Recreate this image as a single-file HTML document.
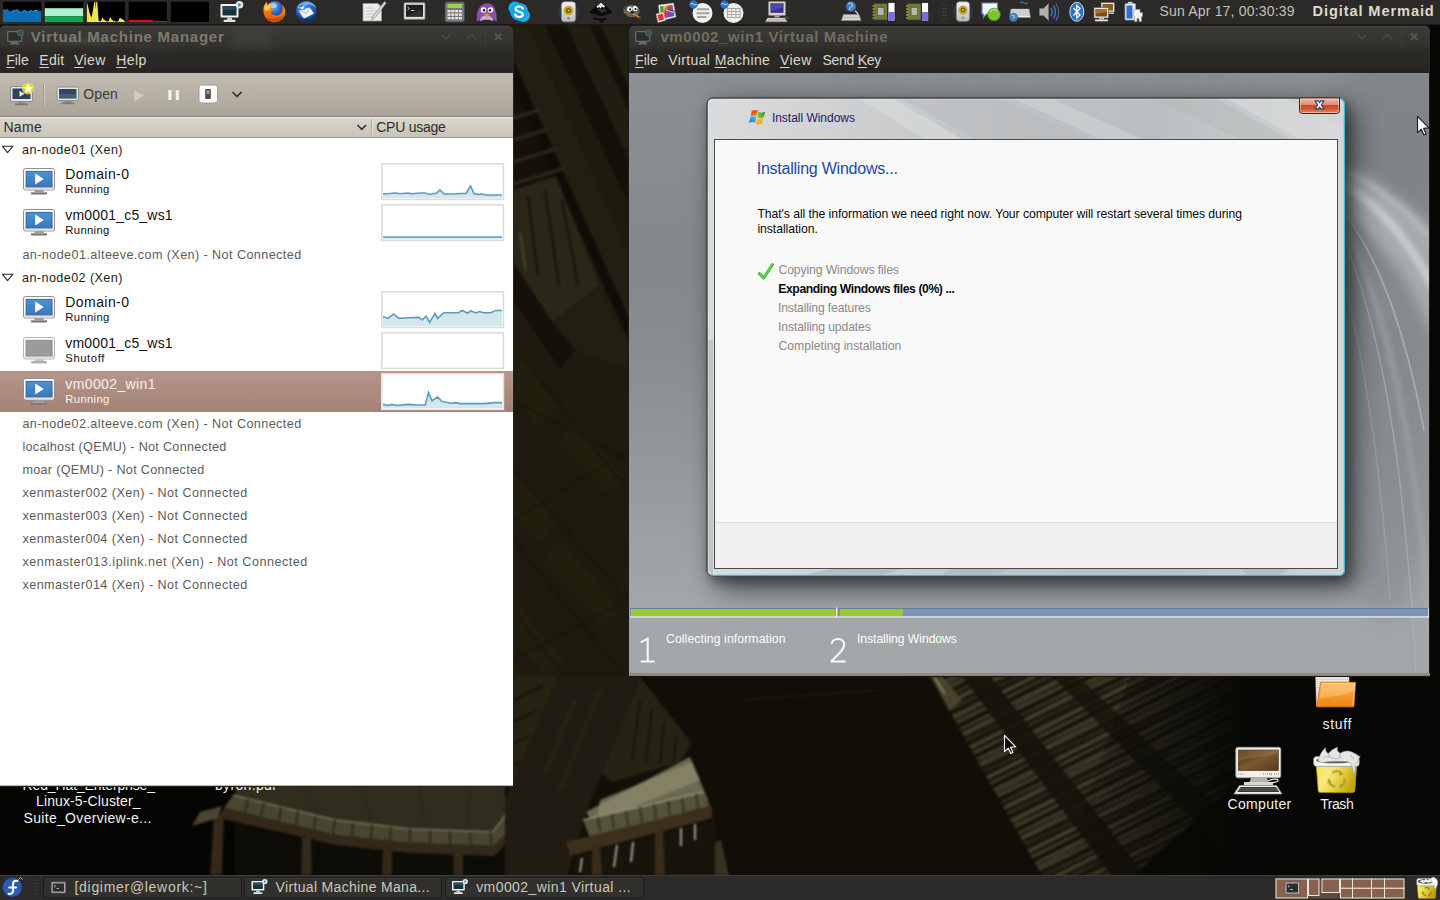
<!DOCTYPE html>
<html>
<head>
<meta charset="utf-8">
<title>Desktop</title>
<style>
*{box-sizing:border-box;margin:0;padding:0}
html,body{width:1440px;height:900px;overflow:hidden;background:#14130c;font-family:"Liberation Sans",sans-serif;}
body{position:relative}
.a{position:absolute}
.t{position:absolute;white-space:nowrap;line-height:1}
u{text-decoration:underline;text-underline-offset:1.5px;text-decoration-thickness:1px}
.layer{position:absolute;left:0;top:0;width:1440px;height:900px;pointer-events:none}
svg{position:absolute;overflow:visible}
</style>
</head>
<body>
<svg id="wall" style="left:0;top:0" width="1440" height="900" viewBox="0 0 1440 900">
<defs>
<filter id="wb1" color-interpolation-filters="sRGB"><feGaussianBlur stdDeviation="1.2"/></filter>
<filter id="wb3" color-interpolation-filters="sRGB"><feGaussianBlur stdDeviation="3"/></filter>
<filter id="wb8" color-interpolation-filters="sRGB"><feGaussianBlur stdDeviation="8"/></filter>
<pattern id="plank" width="7" height="40" patternUnits="userSpaceOnUse" patternTransform="rotate(64)"><rect width="7" height="40" fill="#2e2b1b"/><rect x="0" width="2" height="40" fill="#121008"/><rect x="4" width="1.500" height="40" fill="#45412c"/></pattern>
<pattern id="beam" width="26" height="60" patternUnits="userSpaceOnUse" patternTransform="rotate(-24)"><rect width="26" height="60" fill="#1b190f"/><rect x="0" width="7" height="60" fill="#17150b"/><rect x="14" width="5" height="60" fill="#24221a"/></pattern>
<pattern id="plank2" width="17" height="40" patternUnits="userSpaceOnUse" patternTransform="rotate(62)"><rect width="17" height="40" fill="#2e2b1b" opacity="0"/><rect x="2" width="4" height="40" fill="#0f0e07"/><rect x="10" width="3" height="40" fill="#4a4630"/></pattern><linearGradient id="fadeR" x1="0" y1="0" x2="1" y2="0"><stop offset="0" stop-color="#070705" stop-opacity="0"/><stop offset=".28" stop-color="#070705" stop-opacity=".55"/><stop offset=".5" stop-color="#070705" stop-opacity="1"/><stop offset="1" stop-color="#060604" stop-opacity="1"/></linearGradient><linearGradient id="stripg" x1="0" y1="0" x2="0" y2="1"><stop offset="0" stop-color="#000" stop-opacity="0"/><stop offset=".55" stop-color="#000" stop-opacity=".1"/><stop offset="1" stop-color="#000" stop-opacity=".35"/></linearGradient>
</defs>
<rect width="1440" height="900" fill="#0d0c07"/>
<!-- strip between the windows -->
<rect x="505" y="20" width="130" height="770" fill="#1d1b0e"/>
<g filter="url(#wb1)">
<path d="M513 25H528L634 268V330L513 60z" fill="#211f11"/>
<path d="M545 25H566L634 170V215z" fill="#131109"/>
<path d="M566 25H590L634 122V170z" fill="#201e10"/>
<path d="M590 25H600L634 98V122z" fill="#131109"/>
<path d="M600 25H634V98z" fill="#211f11"/>
<path d="M513 60L634 330V352L513 85z" fill="#0e0d07"/>
<path d="M513 85L560 188 513 205z" fill="#131109"/>
<g stroke="#29271a" stroke-width="3.500"><path d="M513 118l26-8M513 140l36-11M513 162l46-14M513 184l52-16"/></g>
<path d="M513 190L556 176 600 285 552 322 513 262z" fill="#292718"/>
<g stroke="#1a190e" stroke-width="3"><path d="M528 196l10 80M545 190l14 95M562 200l16 85"/></g>
<path d="M520 232l6 40" stroke="#55543c" stroke-width="1.200"/>
<path d="M552 322L600 285 634 352V372L575 350z" fill="#211f11"/>
<path d="M513 262L552 322 575 350 560 368 513 300z" fill="#131109"/>
</g>
<g fill="#27240f" opacity=".4" filter="url(#wb1)"><path d="M520 360l40 46-22 20-25-30zM575 420l50 56-18 18-48-52zM513 470l46 52-20 22-26-28zM560 540l60 68-16 18-62-66zM513 600l52 60-18 16-34-38z"/></g>
<g stroke="#151309" stroke-width="1.300" opacity=".75" filter="url(#wb1)"><path d="M513 470l115 130M513 540l115 140M513 610l100 130M540 380l88 110M513 400l115 60M513 520l115-70M513 660l115-60"/></g>
<!-- far right -->
<rect x="1430" y="25" width="10" height="850" fill="#060604"/>
<!-- lower left under VMM -->
<rect x="0" y="780" width="235" height="100" fill="#050503"/>
<!-- left arc structure -->
<g filter="url(#wb1)">
<path d="M233 780H520V815L493 833 410 830 335 821 281 808 236 796z" fill="#2f2d1e"/>
<path d="M300 786l20 30M360 786l12 38M420 786l5 42M470 786l-2 44" stroke="#2a281b" stroke-width="1.500"/>
<path d="M233 795L281 807 335 820 410 829 493 832 508 812 512 828 494 846 410 843 335 835 281 822 224 808z" fill="#484630"/>
<path d="M233 795L281 807 335 820 410 829 493 832 508 812" fill="none" stroke="#77755a" stroke-width="1.600"/>
<g stroke="#2e2b1c" stroke-width="2.200"><path d="M248 799l-3 13M264 803l-3 13M281 807l-2 14M298 811l-2 14M316 816l-2 14M335 820l-2 14M353 823l-1 14M372 825l-1 14M391 827l-1 14M410 829v14M430 830v14M450 831v14M470 832l1 14M490 832l2 13"/></g>
<path d="M224 808L281 822 335 835 410 843 494 846 512 828V838L494 856 410 853 335 845 281 832 218 818z" fill="#33281a"/>
<g fill="#34291a"><path d="M214 815h10l-2 60h-12z"/><path d="M302 838h9l1 37h-11z"/><path d="M383 850h9v25h-10z"/><path d="M454 854h9v21h-10z"/></g>
<path d="M200 812l22-6-4 12-26 8z" fill="#4a4430"/>
</g>
<!-- region between windows below vm -->
<g filter="url(#wb1)">
<path d="M505 676H760V880H505z" fill="#120f08"/>
<path d="M513 676H560L513 792z" fill="#262312"/>
<g stroke="#17150b" stroke-width="2.500"><path d="M513 700l30-14M513 722l24-12M513 744l16-8M513 766l8-4"/></g>
<path d="M640 676L692 742 680 762 612 782 598 770z" fill="#252313"/>
<g stroke="#16140a" stroke-width="2"><path d="M640 700l-8 60M652 710l-6 52M664 722l-4 42M676 736l-2 28"/></g>
<path d="M558 676H642L586 812 566 880H505V800z" fill="#211c11"/>
<path d="M575 700L545 775M600 690L560 790" stroke="#2c2517" stroke-width="5" opacity=".7"/>
<path d="M668 857L722 840 730 880H668z" fill="#34321f"/>
</g>
<!-- right bright structure -->
<g filter="url(#wb1)">
<path d="M586 812L690 757 708 800 600 836z" fill="#6b694f"/>
<path d="M600 800L692 762 700 780 596 822z" fill="#8e8c70" opacity=".7"/>
<path d="M583 820L704 792 710 806 590 838z" fill="#55533c"/>
<path d="M583 820L704 792" stroke="#96947a" stroke-width="1.500" fill="none"/>
<g stroke="#35321f" stroke-width="2"><path d="M598 817l2 15M612 814l2 15M626 811l2 15M640 807l2 15M654 804l2 15M668 801l2 15M682 798l2 15M696 794l2 15"/></g>
<path d="M566 842L712 806V818L570 856z" fill="#3c301c"/>
<path d="M575 856L715 820V875H575z" fill="#17140b"/>
<g fill="#382c1a"><path d="M592 846h8l2 29h-10z"/><path d="M655 830h8l2 45h-10z"/></g>
<g stroke="#c9c7ae" stroke-width="1.600"><path d="M582 858l-2 14M617 845l-3 22M633 842l-2 20M681 828v18M695 824v16"/></g>

</g>
<!-- right wood planks -->
<g filter="url(#wb1)">
<path d="M905 676H1268L1252 770 1132 876H1042L934 722z" fill="url(#plank)"/>
<path d="M905 676H1268L1252 770 1132 876H1042L934 722z" fill="url(#plank2)" opacity=".55"/>
<path d="M962 676L990 676 1146 876 1112 876z" fill="#15130a" opacity=".9"/>
<path d="M1052 676L1078 676 1262 850 1240 868z" fill="#15130a" opacity=".8"/>
<path d="M905 676L934 722 962 700 942 676z" fill="#48432c"/>
<path d="M925 680l12 18M935 678l10 16" stroke="#b0a888" stroke-width="1.200"/>
</g>
<path d="M1130 676H1440V876H1060z" fill="url(#fadeR)"/>
<path d="M640 676H930L1042 876H730L715 810 692 742z" fill="#110e08" filter="url(#wb1)"/>
<path d="M740 700L880 690" stroke="#2a2012" stroke-width="1.500" opacity=".6" filter="url(#wb1)"/>
</svg>
<div class="layer" id="desk">
<svg style="left:0;top:0" width="1440" height="900" viewBox="0 0 1440 900">
<defs>
<linearGradient id="fold" x1="0" y1="0" x2="0" y2="1"><stop offset="0" stop-color="#fbb85a"/><stop offset=".55" stop-color="#f69a2c"/><stop offset="1" stop-color="#ee8516"/></linearGradient>
<linearGradient id="cscr" x1="0" y1="0" x2="1" y2="1"><stop offset="0" stop-color="#40290f"/><stop offset=".5" stop-color="#7c5a30"/><stop offset="1" stop-color="#553a1a"/></linearGradient>
<linearGradient id="tr" x1="0" y1="0" x2="1" y2=".35"><stop offset="0" stop-color="#f4e45e"/><stop offset=".35" stop-color="#f7ea7c"/><stop offset=".7" stop-color="#e3cc3a"/><stop offset="1" stop-color="#c4a610"/></linearGradient>
</defs>
<!-- folder -->
<path d="M1315.600 677H1349V706H1316.500z" fill="#ececea" stroke="#bdbdbb" stroke-width=".5"/>
<path d="M1316.500 679.500h32M1316.500 681.500h32M1316.500 683.500h5M1316.500 685.500h4.700M1316.500 687.500h4.400M1316.500 689.500h4.100M1316.500 691.500h3.800M1316.500 693.500h3.500M1316.500 695.500h3.200M1316.500 697.500h2.900M1316.500 699.500h2.600M1316.500 701.500h2.300" stroke="#c9c9c7" stroke-width=".7"/>
<path d="M1320.600 682.300H1355.600L1353.800 706.800H1316.800Z" fill="url(#fold)" stroke="#dd7a0c" stroke-width=".9" stroke-linejoin="round"/>
<path d="M1321.500 683.300H1354.600L1353 705.600" fill="none" stroke="#fcdcae" stroke-width=".8" opacity=".85"/>
<path d="M1321.400 683.500H1354.500L1354 690.500C1345 696.500 1332 695.500 1319.500 698.500Z" fill="#fdd79c" opacity=".4"/>
<!-- computer -->
<rect x="1235.800" y="747.300" width="45" height="30.500" rx="2" fill="#f1f0ec" stroke="#a09e96" stroke-width=".8"/>
<rect x="1238.300" y="750" width="40" height="20.500" fill="url(#cscr)" stroke="#3a2a14" stroke-width=".6"/>
<path d="M1238.300 762c10-6 26-4 40-9v-3h-40z" fill="#a88a5a" opacity=".35"/>
<path d="M1238 774h6M1263 774h8M1274 774h5" stroke="#8a8880" stroke-width="1.200" stroke-dasharray="1 1"/><rect x="1270.500" y="773" width="1.300" height="2.200" fill="#f08a1a"/>
<path d="M1251 778h16l1.500 4h-19z" fill="#b4b2aa"/><rect x="1244" y="782" width="29" height="3" fill="#d8d6ce"/>
<path d="M1268 781c5-2.500 10-2.500 10-.5s-5 1.500-9 3" fill="none" stroke="#e8e6de" stroke-width="1.300"/>
<path d="M1239.500 785.500h37l5.500 8.500h-48z" fill="#f1f0ec" stroke="#a09e96" stroke-width=".7"/>
<path d="M1240.500 787h35.500l3.300 5h-42z" fill="#34332f"/><path d="M1239.500 788.600h37.500M1238.500 790.300h39.500" stroke="#8a8880" stroke-width=".5"/>
<!-- trash -->
<path d="M1316.300 765.500H1356.700L1354.800 790.400Q1354.600 792.600 1352.400 792.600H1320.600Q1318.400 792.600 1318.200 790.400Z" fill="url(#tr)" stroke="#b0940e" stroke-width=".8"/>
<rect x="1313.600" y="756.600" width="45.600" height="9.800" rx="3" fill="#f4f5f4" stroke="#8f8f8d" stroke-width=".7"/>
<ellipse cx="1335" cy="760.300" rx="19" ry="3" fill="#5a5b5e"/>
<path d="M1318 760.500C1319.500 755.500 1322 751 1325.500 747.600 1325.300 750.500 1326.300 752.600 1328.300 753.600 1330.800 750.600 1334 748.400 1337.500 747.300 1336.700 750 1337.700 752 1340.300 753.300 1343.300 751.300 1347 750.500 1350.300 751.500 1354 752.600 1356.600 754.600 1360.300 757 1358.600 758.300 1357.700 760 1357.400 762.300 1355.500 763.300 1354.800 765.300 1355 768.300 1355.200 771 1354.800 773.300 1354 775.300 1353 772.300 1352.600 769.300 1352 766 1351.600 763.600 1349.600 762 1346 761.600 1340 761 1330 761.300 1324 762.300 1321.500 762.600 1319.300 762 1318 760.500Z" fill="#e6e7e5" stroke="#9a9b99" stroke-width=".6"/>
<path d="M1323 758c2.500-1.800 5.500-2 8.500-.3 3 1.600 7 1 10-1M1328.300 753.600l1.700 3.400M1340.300 753.300l-1.300 3.700M1350 755l4 4" stroke="#a9aaa8" stroke-width=".8" fill="none"/>
<g fill="none" stroke="#b3a238" stroke-width="2.600" opacity=".9"><path d="M1332.500 773c2.600-2.600 6.300-2.400 8.600 .6"/><path d="M1344.300 778.300c1 3.400-.6 6.400-4 8"/><path d="M1335.300 786.600c-3.400-.2-5.800-2.500-6.400-5.800"/></g>
<g fill="#b3a238"><path d="M1339.800 770.800l4 3.300-4.800 1.600z"/><path d="M1343.800 786.800l-5 1.200 1.700-4.600z"/><path d="M1327.300 783.300l1.100-5 3.500 3.500z"/></g>
</svg>
<span class="t" style="left:1322.5px;top:717.2px;font-size:14px;color:#f1f1ef;letter-spacing:0.65px;">stuff</span>
<span class="t" style="left:1227.5px;top:797.2px;font-size:14px;color:#f1f1ef;letter-spacing:0.33px;">Computer</span>
<span class="t" style="left:1320.3px;top:797.2px;font-size:14px;color:#f1f1ef;letter-spacing:-0.47px;">Trash</span>
<span class="t" style="left:22.5px;top:778.2px;font-size:14px;color:#f1f1ef;letter-spacing:-0.12px;">Red_Hat_Enterprise_</span>
<span class="t" style="left:36.0px;top:794.2px;font-size:14px;color:#f1f1ef;letter-spacing:0.12px;">Linux-5-Cluster_</span>
<span class="t" style="left:23.5px;top:811.2px;font-size:14px;color:#f1f1ef;letter-spacing:0.32px;">Suite_Overview-e...</span>
<span class="t" style="left:215.0px;top:778.2px;font-size:14px;color:#f1f1ef;letter-spacing:0.33px;">byron.pdf</span>
</div>
<div class="layer" id="vmm">
<svg width="0" height="0" style="left:0;top:0"><defs>
<linearGradient id="gscr" x1="0" y1="0" x2="0" y2="1"><stop offset="0" stop-color="#4f90d2"/><stop offset="1" stop-color="#3a79ba"/></linearGradient>
<linearGradient id="gbody" x1="0" y1="0" x2="0" y2="1"><stop offset="0" stop-color="#efefef"/><stop offset="1" stop-color="#c4c4c4"/></linearGradient>
<g id="monrun"><rect x="0.5" y="0.5" width="31" height="21.5" rx="2" fill="url(#gbody)" stroke="#8f8f8f"/><rect x="1.5" y="1.5" width="29" height="19.5" rx="1.2" fill="none" stroke="#fbfbfb"/><rect x="3.2" y="3.4" width="25.8" height="15.4" fill="url(#gscr)" stroke="#2b5f9c" stroke-width=".8"/><path d="M12.2 5.4 L20.8 11 L12.2 16.6Z" fill="#fff"/><path d="M12 22 h8 l1 2 h-10z" fill="#9c9c9c"/><rect x="8" y="24" width="16" height="2.4" rx="1.2" fill="#6f6f6f"/><rect x="9" y="24.3" width="14" height=".8" fill="#b9b9b9"/></g>
<g id="monoff"><rect x="0.5" y="0.5" width="31" height="21.5" rx="2" fill="url(#gbody)" stroke="#b5b5b5"/><rect x="1.5" y="1.5" width="29" height="19.5" rx="1.2" fill="none" stroke="#fbfbfb"/><rect x="3.2" y="3.4" width="25.8" height="15.4" fill="#9b9b9b" stroke="#8a8a8a" stroke-width=".8"/><path d="M12 22 h8 l1 2 h-10z" fill="#c4c4c4"/><rect x="8" y="24" width="16" height="2.4" rx="1.2" fill="#b0b0b0"/></g>
</defs></svg>
<!-- frame -->
<div class="a" style="left:0;top:25px;width:514px;height:762px;background:#25241f;border-top-right-radius:6px;border-top-left-radius:5px"></div>
<div class="a" style="left:0;top:26px;width:513px;height:47px;border-top-right-radius:5px;border-top-left-radius:4px;background:linear-gradient(#45443f 0,#3b3a36 2px,#33322f 20px,#2b2a27 24px,#2a2927 36px,#262523 47px)"></div>
<svg style="left:0;top:26px" width="513" height="47" viewBox="0 26 513 47"><defs><filter id="gb" color-interpolation-filters="sRGB"><feGaussianBlur stdDeviation="2"/></filter></defs><g filter="url(#gb)" opacity=".3"><rect x="60" y="38" width="44" height="5" fill="#6e6d64"/><rect x="232" y="27" width="40" height="24" fill="#4c4b45"/><rect x="135" y="44" width="40" height="10" fill="#3d3c38"/></g></svg>
<!-- title icon -->
<svg style="left:6.5px;top:29px" width="18" height="17" viewBox="0 0 18 17"><rect x=".700" y="2.700" width="14" height="9.700" rx=".8" fill="#26302e" stroke="#6c6b65" stroke-width="1.300"/><path d="M5 13.100h5.400l2.600 2.500h-10.600z" fill="#6c6b65"/><circle cx="13.400" cy="3.900" r="2.900" fill="#3d4a4c" stroke="#6c6b65" stroke-width="1"/><path d="M12.500 2.500l2.300 1.400-2.300 1.400z" fill="#2b5c64"/></svg>
<span class="t" style="left:30.8px;top:29.2px;font-size:15px;font-weight:700;color:#7d7b6b;letter-spacing:0.75px;">Virtual Machine Manager</span>
<!-- title buttons -->
<svg style="left:436px;top:28px" width="76" height="18" viewBox="0 0 76 18"><path d="M5.5 6.5 L10 11 L14.5 6.5" fill="none" stroke="#4d4c46" stroke-width="1.2"/><path d="M31 11 L35.5 6.5 L40 11" fill="none" stroke="#4d4c46" stroke-width="1.2"/><path d="M49.5 1v16" stroke="#3e3d39" stroke-width="1"/><path d="M59 5.5l6.5 6.5M65.5 5.5l-6.5 6.5" stroke="#55544e" stroke-width="1.9"/></svg>
<!-- menu -->
<span class="t" style="left:6.3px;top:53.2px;font-size:14px;color:#dad6ca;letter-spacing:-0.06px;"><u>F</u>ile</span>
<span class="t" style="left:39.3px;top:53.2px;font-size:14px;color:#dad6ca;letter-spacing:0.25px;"><u>E</u>dit</span>
<span class="t" style="left:74.2px;top:53.2px;font-size:14px;color:#dad6ca;letter-spacing:0.33px;"><u>V</u>iew</span>
<span class="t" style="left:116.2px;top:53.2px;font-size:14px;color:#dad6ca;letter-spacing:0.40px;"><u>H</u>elp</span>
<!-- toolbar -->
<div class="a" style="left:0;top:73px;width:513px;height:43px;background:linear-gradient(#c1bcb1,#b6b0a5 50%,#a9a398)"></div>
<svg style="left:9px;top:82px" width="28" height="26" viewBox="0 0 28 26"><rect x="1.5" y="4.5" width="22" height="15" rx="1.5" fill="#e4e4e2" stroke="#8d8d89"/><rect x="3.5" y="6.5" width="18" height="10.5" fill="#2f425c"/><path d="M10.5 8.8l5 3-5 3z" fill="#e8eef5"/><rect x="9" y="20" width="7" height="1.6" fill="#8d8d89"/><rect x="6" y="21.6" width="13" height="1.6" rx=".8" fill="#77777a"/><circle cx="19" cy="6.5" r="6" fill="#e9e23a" opacity=".85"/><path d="M19 1.8l1.5 3.1 3.4.4-2.5 2.3.7 3.4-3.1-1.7-3.1 1.7.7-3.4-2.5-2.3 3.4-.4z" fill="#fffde0"/></svg>
<div class="a" style="left:43px;top:84px;width:1px;height:22px;background:#9d978d"></div><div class="a" style="left:44px;top:84px;width:1px;height:22px;background:#d3cec4"></div>
<svg style="left:56px;top:86px" width="24" height="20" viewBox="0 0 24 20"><rect x="1" y="1" width="21.5" height="13.5" rx="1.5" fill="#e6e6e4" stroke="#8d8d89"/><rect x="3" y="3" width="17.5" height="9.5" fill="#34465f"/><rect x="3" y="8" width="17.5" height="4.500" fill="#5a6c88" opacity=".55"/><rect x="8.5" y="15" width="7" height="1.8" fill="#8d8d89"/><rect x="5.5" y="16.6" width="13" height="1.6" rx=".8" fill="#77777a"/></svg>
<span class="t" style="left:83.3px;top:87.2px;font-size:14px;color:#3c3b38;letter-spacing:0.08px;">Open</span>
<svg style="left:132px;top:88px" width="16" height="16" viewBox="0 0 16 16"><path d="M1.5 1.2L13 7.6L1.5 14z" fill="#cfcac0" stroke="#b1aba0" stroke-width=".8"/></svg>
<svg style="left:166px;top:88px" width="16" height="14" viewBox="0 0 16 14"><rect x="1.8" y="1.5" width="4.2" height="11" rx=".6" fill="#f4f2ee" stroke="#aaa59b" stroke-width=".8"/><rect x="9.2" y="1.5" width="4.2" height="11" rx=".6" fill="#f4f2ee" stroke="#aaa59b" stroke-width=".8"/></svg>
<svg style="left:198px;top:84px" width="21" height="21" viewBox="0 0 21 21"><rect x="1" y="1" width="18.5" height="18" rx="2.5" fill="#fbfbfa" stroke="#a29d93"/><rect x="7.2" y="5" width="5.6" height="10" rx=".8" fill="#4a4a48"/><rect x="8.6" y="6.2" width="2.8" height="4" fill="#9a9a97"/></svg>
<svg style="left:231px;top:90px" width="12" height="9" viewBox="0 0 12 9"><path d="M1.5 2l4.5 4.5L10.5 2" fill="none" stroke="#33322f" stroke-width="1.7"/></svg>
<!-- header -->
<div class="a" style="left:0;top:116px;width:513px;height:22px;background:linear-gradient(#dcd8ce,#d2cdc3 50%,#c9c4ba);border-top:1px solid #8a857c;border-bottom:1px solid #9f9a91"></div>
<div class="a" style="left:0;top:117px;width:513px;height:1px;background:#efece5"></div>
<div class="a" style="left:371px;top:119px;width:1px;height:16px;background:#aba69c"></div><div class="a" style="left:372px;top:119px;width:1px;height:16px;background:#ece9e2"></div>
<span class="t" style="left:3.4px;top:120.2px;font-size:14px;color:#2e2d2a;letter-spacing:0.31px;">Name</span>
<span class="t" style="left:376.2px;top:120.2px;font-size:14px;color:#2e2d2a;letter-spacing:-0.25px;">CPU usage</span>
<svg style="left:356px;top:123px" width="12" height="9" viewBox="0 0 12 9"><path d="M1.5 2l4.3 4.3L10.1 2" fill="none" stroke="#33322f" stroke-width="1.6"/></svg>
<!-- list -->
<div class="a" style="left:0;top:138px;width:513px;height:647px;background:#fff"></div>
<div class="a" style="left:0;top:785px;width:513px;height:1px;background:#b9b5ac"></div>
<div class="a" style="left:0;top:371px;width:513px;height:41px;background:linear-gradient(#b6968a,#ad8c80 50%,#a58276)"></div>
<!-- group rows -->
<svg style="left:1px;top:145px" width="14" height="9" viewBox="0 0 14 9"><path d="M1.3 1.2h10.6L6.6 7.6z" fill="#fff" stroke="#2a2a2a" stroke-width="1.1" stroke-linejoin="round"/></svg>
<span class="t" style="left:22.0px;top:143.9px;font-size:12.6px;color:#1c1c1c;letter-spacing:0.43px;">an-node01 (Xen)</span>
<svg style="left:23px;top:168px" width="32" height="27"><use href="#monrun"/></svg>
<span class="t" style="left:65.3px;top:167.2px;font-size:14px;color:#111;letter-spacing:0.43px;">Domain-0</span>
<span class="t" style="left:65.3px;top:183.6px;font-size:11.3px;color:#111;letter-spacing:0.33px;">Running</span>
<svg style="left:23px;top:209px" width="32" height="27"><use href="#monrun"/></svg>
<span class="t" style="left:65.3px;top:208.2px;font-size:14px;color:#111;letter-spacing:0.19px;">vm0001_c5_ws1</span>
<span class="t" style="left:65.3px;top:224.6px;font-size:11.3px;color:#111;letter-spacing:0.33px;">Running</span>
<span class="t" style="left:22.4px;top:248.9px;font-size:12.6px;color:#5b5b5b;letter-spacing:0.42px;">an-node01.alteeve.com (Xen) - Not Connected</span>
<svg style="left:1px;top:273px" width="14" height="9" viewBox="0 0 14 9"><path d="M1.3 1.2h10.6L6.6 7.6z" fill="#fff" stroke="#2a2a2a" stroke-width="1.1" stroke-linejoin="round"/></svg>
<span class="t" style="left:22.0px;top:271.9px;font-size:12.6px;color:#1c1c1c;letter-spacing:0.42px;">an-node02 (Xen)</span>
<svg style="left:23px;top:296px" width="32" height="27"><use href="#monrun"/></svg>
<span class="t" style="left:65.3px;top:295.2px;font-size:14px;color:#111;letter-spacing:0.43px;">Domain-0</span>
<span class="t" style="left:65.3px;top:311.6px;font-size:11.3px;color:#111;letter-spacing:0.33px;">Running</span>
<svg style="left:23px;top:337px" width="32" height="27"><use href="#monoff"/></svg>
<span class="t" style="left:65.3px;top:336.2px;font-size:14px;color:#111;letter-spacing:0.19px;">vm0001_c5_ws1</span>
<span class="t" style="left:65.3px;top:352.6px;font-size:11.3px;color:#111;letter-spacing:0.57px;">Shutoff</span>
<svg style="left:23px;top:378px" width="32" height="27"><use href="#monrun"/></svg>
<span class="t" style="left:65.3px;top:377.2px;font-size:14px;color:#f6f1ec;letter-spacing:0.39px;">vm0002_win1</span>
<span class="t" style="left:65.3px;top:393.6px;font-size:11.3px;color:#f6f1ec;letter-spacing:0.33px;">Running</span>
<span class="t" style="left:22.4px;top:417.9px;font-size:12.6px;color:#5b5b5b;letter-spacing:0.42px;">an-node02.alteeve.com (Xen) - Not Connected</span>
<span class="t" style="left:22.4px;top:440.9px;font-size:12.6px;color:#5b5b5b;letter-spacing:0.30px;">localhost (QEMU) - Not Connected</span>
<span class="t" style="left:22.4px;top:463.9px;font-size:12.6px;color:#5b5b5b;letter-spacing:0.32px;">moar (QEMU) - Not Connected</span>
<span class="t" style="left:22.4px;top:486.9px;font-size:12.6px;color:#5b5b5b;letter-spacing:0.47px;">xenmaster002 (Xen) - Not Connected</span>
<span class="t" style="left:22.4px;top:509.9px;font-size:12.6px;color:#5b5b5b;letter-spacing:0.47px;">xenmaster003 (Xen) - Not Connected</span>
<span class="t" style="left:22.4px;top:533.0px;font-size:12.6px;color:#5b5b5b;letter-spacing:0.47px;">xenmaster004 (Xen) - Not Connected</span>
<span class="t" style="left:22.4px;top:556.0px;font-size:12.6px;color:#5b5b5b;letter-spacing:0.51px;">xenmaster013.iplink.net (Xen) - Not Connected</span>
<span class="t" style="left:22.4px;top:579.0px;font-size:12.6px;color:#5b5b5b;letter-spacing:0.47px;">xenmaster014 (Xen) - Not Connected</span>
<!-- cpu graphs -->
<svg style="left:0;top:0" width="513" height="786" viewBox="0 0 513 786">
<g fill="#fff" stroke="#dcdcdc" stroke-width="1.6">
<rect x="381.8" y="163.8" width="121.6" height="35.6"/><rect x="381.8" y="204.8" width="121.6" height="35.6"/><rect x="381.8" y="291.8" width="121.6" height="35.6"/><rect x="381.8" y="332.8" width="121.6" height="35.6"/><rect x="381.8" y="373.8" width="121.6" height="35.6" stroke="#e9e2df"/>
</g>
<path id="g1" d="M383 194L390 193.5 395 193 400 193.8 408 193 412 193.8 420 193 425 193 430 194.5 433 193.5 436 193.5 440 189.8 444 194 455 194 460 193.5 466 193.5 470.5 186 474 193.5 478 194.5 482 194 486 195 502 195V198H383z" fill="#d4e7ef"/>
<path d="M383 194L390 193.5 395 193 400 193.8 408 193 412 193.8 420 193 425 193 430 194.5 433 193.5 436 193.5 440 189.8 444 194 455 194 460 193.5 466 193.5 470.5 186 474 193.5 478 194.5 482 194 486 195 502 195" fill="none" stroke="#5a9db9" stroke-width="1.6"/>
<path d="M383 237H502V239H383z" fill="#d4e7ef"/><path d="M383 237H502" stroke="#5a9db9" stroke-width="1.6"/>
<path d="M383 316.6L388 318.4 393.5 314 399 318.4 408 317.7 418.8 317.4 422.4 320 426 316 429.6 322.4 435 313.4 437.5 318.4 444 312.7 458.5 312.7 462 310.5 467.5 313 471 311 475.8 313 479.4 311.6 483.8 312.7 491 312.7 495.3 310.5 502 310.5V326H383z" fill="#d4e7ef"/>
<path d="M383 316.6L388 318.4 393.5 314 399 318.4 408 317.7 418.8 317.4 422.4 320 426 316 429.6 322.4 435 313.4 437.5 318.4 444 312.7 458.5 312.7 462 310.5 467.5 313 471 311 475.8 313 479.4 311.6 483.8 312.7 491 312.7 495.3 310.5 502 310.5" fill="none" stroke="#5a9db9" stroke-width="1.6"/>
<path d="M383 404.4L388 405.5 391.7 404.4 397 405.5 408 404.4 418.8 405 425.3 405 428.5 392.5 432 400.8 437.5 397 442.2 401.5 451 403.3 455.6 402.6 460.3 403.6 483.8 403.6 494.6 402.6 502 402.6V408H383z" fill="#d4e7ef"/>
<path d="M383 404.4L388 405.5 391.7 404.4 397 405.5 408 404.4 418.8 405 425.3 405 428.5 392.5 432 400.8 437.5 397 442.2 401.5 451 403.3 455.6 402.6 460.3 403.6 483.8 403.6 494.6 402.6 502 402.6" fill="none" stroke="#5a9db9" stroke-width="1.6"/>
</svg>
</div>
<div class="layer" id="vm">
<div class="a" style="left:628px;top:25px;width:802px;height:652px;background:#1b1a16;border-top-left-radius:6px;border-top-right-radius:6px"></div>
<div class="a" style="left:629px;top:26px;width:801px;height:47px;border-top-left-radius:5px;border-top-right-radius:5px;background:linear-gradient(#45443f 0,#3b3a36 2px,#33322f 20px,#2b2a27 24px,#2a2927 36px,#262523 47px)"></div>
<svg style="left:634.8px;top:29px" width="18" height="17" viewBox="0 0 18 17"><rect x=".700" y="2.700" width="14" height="9.700" rx=".8" fill="#26302e" stroke="#6c6b65" stroke-width="1.300"/><path d="M5 13.100h5.400l2.600 2.500h-10.600z" fill="#6c6b65"/><circle cx="13.400" cy="3.900" r="2.900" fill="#3d4a4c" stroke="#6c6b65" stroke-width="1"/><path d="M12.500 2.500l2.300 1.400-2.300 1.400z" fill="#2b5c64"/></svg>
<span class="t" style="left:660.4px;top:29.2px;font-size:15px;font-weight:700;color:#706e5f;letter-spacing:0.60px;">vm0002_win1 Virtual Machine</span>
<svg style="left:1352px;top:28px" width="76" height="18" viewBox="0 0 76 18"><path d="M5.5 6.5 L10 11 L14.5 6.5" fill="none" stroke="#4d4c46" stroke-width="1.2"/><path d="M31 11 L35.5 6.5 L40 11" fill="none" stroke="#4d4c46" stroke-width="1.2"/><path d="M49.5 1v16" stroke="#3e3d39" stroke-width="1"/><path d="M59 5.5l6.5 6.5M65.5 5.5l-6.5 6.5" stroke="#55544e" stroke-width="1.9"/></svg>
<span class="t" style="left:635.1px;top:53.2px;font-size:14px;color:#dad6ca;letter-spacing:0.01px;"><u>F</u>ile</span>
<span class="t" style="left:668.2px;top:53.2px;font-size:14px;color:#dad6ca;letter-spacing:0.39px;">Virtual <u>M</u>achine</span>
<span class="t" style="left:780.0px;top:53.2px;font-size:14px;color:#dad6ca;letter-spacing:0.40px;"><u>V</u>iew</span>
<span class="t" style="left:822.4px;top:53.2px;font-size:14px;color:#dad6ca;letter-spacing:-0.26px;">Send <u>K</u>ey</span>
<!-- guest screen -->
<div class="a" style="left:629px;top:673px;width:801px;height:3px;background:linear-gradient(#8d847c,#9a9189 60%,#7a726a)"></div>
<div class="a" id="scr" style="left:629px;top:73px;width:800px;height:600px;overflow:hidden;background:linear-gradient(#8c9094 0,#898d91 80px,#84888c 180px,#888c8f 270px,#94979a 380px,#9fa2a4 480px,#a4a7a9 540px,#a3a6a8 600px)">
<svg style="left:0;top:0" width="800" height="600" viewBox="629 73 800 600">
<defs><filter id="b6" color-interpolation-filters="sRGB"><feGaussianBlur stdDeviation="6"/></filter><filter id="b3" color-interpolation-filters="sRGB"><feGaussianBlur stdDeviation="2.5"/></filter><filter id="b12" color-interpolation-filters="sRGB"><feGaussianBlur stdDeviation="14"/></filter></defs>
<!-- vignette -->
<ellipse cx="1395" cy="130" rx="70" ry="80" fill="#787c80" opacity=".5" filter="url(#b12)"/>
<ellipse cx="1385" cy="470" rx="45" ry="150" fill="#808488" opacity=".55" filter="url(#b12)"/>
<ellipse cx="1030" cy="86" rx="330" ry="14" fill="#84888c" opacity=".5" filter="url(#b6)"/>
<!-- light streaks right side -->
<path d="M1340 160 C1375 178 1410 205 1436 232 L1436 345 C1415 290 1385 240 1340 212Z" fill="#b3b6b8" opacity=".75" filter="url(#b6)"/>
<g filter="url(#b3)" fill="none" stroke-linecap="round">
<path d="M1346 186 C1378 205 1408 240 1432 285" stroke="#d2d4d5" stroke-width="9" opacity=".75"/>
<path d="M1346 172 C1380 188 1410 212 1432 240" stroke="#c2c5c7" stroke-width="4" opacity=".7"/>
<path d="M1346 228 C1376 290 1398 370 1414 480 S1428 620 1432 675" stroke="#a7aaac" stroke-width="5" opacity=".6"/>
</g>
<g fill="none" stroke-linecap="round" opacity=".7">
<path d="M1346 215 C1380 262 1405 330 1424 430" stroke="#b9bcbe" stroke-width="1.600"/>
<path d="M1346 245 C1372 310 1392 400 1404 520 S1414 640 1416 675" stroke="#aeb1b3" stroke-width="1.400"/>
<path d="M1346 290 C1364 360 1380 460 1390 600" stroke="#a4a7a9" stroke-width="1.400"/>
</g>
<!-- dialog shadow -->
<rect x="716" y="108" width="640" height="482" rx="10" fill="#2a2d30" opacity=".7" filter="url(#b12)"/><rect x="710" y="102" width="640" height="480" rx="8" fill="#2a2d30" opacity=".62" filter="url(#b6)"/>
<!-- dialog frame -->
<defs><linearGradient id="fr" x1="0" y1="0" x2="1" y2="0"><stop offset="0" stop-color="#dadcdd"/><stop offset=".2" stop-color="#cfd1d3"/><stop offset=".45" stop-color="#c1c4c6"/><stop offset=".7" stop-color="#bbbec0"/><stop offset=".87" stop-color="#c8cbcd"/><stop offset="1" stop-color="#d3d5d7"/></linearGradient>
<clipPath id="dc"><rect x="707" y="98" width="638" height="478" rx="6"/></clipPath>
<linearGradient id="cb" x1="0" y1="0" x2="0" y2="1"><stop offset="0" stop-color="#f3bdb0"/><stop offset=".43" stop-color="#de8d7a"/><stop offset=".46" stop-color="#cb4424"/><stop offset=".72" stop-color="#cf5a38"/><stop offset="1" stop-color="#e68c6a"/></linearGradient>
</defs>
<rect x="707" y="98" width="638" height="478" rx="6" fill="url(#fr)"/>
<g clip-path="url(#dc)">
<path d="M858 98 L892 98 L962 139 L924 139Z" fill="#d6d8d9" opacity=".75"/>
<path d="M900 98 L1000 98 L1090 139 L975 139Z" fill="#b7babc" opacity=".5"/>
<path d="M1012 98 L1050 98 L1142 139 L1100 139Z" fill="#cdd0d1" opacity=".7"/>
<path d="M1150 98 L1215 98 L1290 139 L1240 139Z" fill="#b4b7b9" opacity=".45"/>
<path d="M1225 98 L1285 98 L1345 128 L1345 139 L1300 139Z" fill="#d8dadb" opacity=".6"/>
<rect x="707" y="98" width="7" height="478" fill="#d9dbdc" opacity=".7"/>
<rect x="708" y="340" width="5" height="236" fill="#b9bcbe" opacity=".7"/>
<path d="M830 569 L900 569 L880 576 L800 576Z M950 569 L1010 569 L990 576 L940 576Z M1240 569 L1290 569 L1275 576 L1250 576Z" fill="#b4b7b9" opacity=".8"/>
</g>
<rect x="706.7" y="97.7" width="638.6" height="478.6" rx="6.5" fill="none" stroke="#43464a" stroke-width="1" opacity=".75"/><rect x="707.8" y="98.8" width="636.4" height="476.400" rx="5.5" fill="none" stroke="#f6f7f7" stroke-width="1" opacity=".9"/>
<path d="M1340 98.600 Q1344.300 99 1344.300 104 V570 Q1344.300 575.300 1339 575.300 H713" fill="none" stroke="#2fb9d3" stroke-width="1.200"/>
<path d="M707.300 571 V104 Q707.300 98.300 713 98.300 H1300" fill="none" stroke="#2b2d30" stroke-width="1" opacity=".8"/><path d="M707.300 571 Q707.500 575.300 713 575.300" fill="none" stroke="#2b2d30" stroke-width="1" opacity=".6"/>
<!-- client area -->
<rect x="714.5" y="139.5" width="623" height="429" fill="#f9f9f9" stroke="#4b4b4b"/>
<rect x="715" y="522" width="622" height="46" fill="#f0f0f0"/>
<rect x="715" y="522" width="622" height="1" fill="#dedede"/>
<!-- close button -->
<path d="M1299.500 98 H1339.500 V110.500 Q1339.500 113.500 1336.500 113.500 H1302.500 Q1299.500 113.500 1299.500 110.500Z" fill="url(#cb)" stroke="#5a1c10" stroke-width="1"/>
<path d="M1300.500 99 H1338.500 V110.300 Q1338.500 112.500 1336.300 112.500 H1302.700 Q1300.500 112.500 1300.500 110.300Z" fill="none" stroke="#fff" stroke-width="1" opacity=".38"/>
<path d="M1315 100.900H1318.300L1319.500 102.800 1320.700 100.900H1324L1321.300 104.900 1324 108.900H1320.700L1319.500 107 1318.300 108.900H1315L1317.700 104.900Z" fill="#fbfbfb" stroke="#39435e" stroke-width="1.100" stroke-linejoin="round"/>
<!-- windows flag -->
<defs><linearGradient id="wr" x1="0" y1="0" x2=".6" y2="1"><stop offset="0" stop-color="#d2351c"/><stop offset="1" stop-color="#fa8e16"/></linearGradient><linearGradient id="wg" x1="0" y1="1" x2="1" y2="0"><stop offset="0" stop-color="#86d81c"/><stop offset="1" stop-color="#2c8a2a"/></linearGradient><linearGradient id="wb" x1="0" y1="1" x2="1" y2="0"><stop offset="0" stop-color="#0e7fd8"/><stop offset="1" stop-color="#4cc0fa"/></linearGradient><linearGradient id="wy" x1="0" y1="0" x2="1" y2="1"><stop offset="0" stop-color="#ffd23a"/><stop offset="1" stop-color="#f0960e"/></linearGradient></defs>
<g transform="translate(749,109.700)">
<path d="M2.700 1.400C4.700 .1 6.900 0 9 .9L7.700 6.400C5.900 5.500 3.900 5.500 1.600 6.700Z" fill="url(#wr)"/>
<path d="M9.700 2.200C11.600 3.300 13.700 3.200 16.200 1.800L14.700 7.500C12.300 8.800 10.300 8.900 8.400 7.800Z" fill="url(#wg)"/>
<path d="M1.400 7.500C3.500 6.400 5.500 6.400 7.400 7.300L6 13C4.200 12.100 2.300 12.100 0 13.200Z" fill="url(#wb)"/>
<path d="M8.100 8.500C10 9.600 12 9.500 14.400 8.300L13 13.800C10.700 15.100 8.600 15.200 6.700 14.100Z" fill="url(#wy)"/>
</g>
<!-- check mark -->
<path d="M759.400 273.700 L763.800 277.900 L772.500 264.700" fill="none" stroke="#42bf32" stroke-width="3" stroke-linecap="round" stroke-linejoin="round"/>
<path d="M759.800 273.800 L763.700 277.300 L772.100 265.200" fill="none" stroke="#6fe85e" stroke-width="1" stroke-linecap="round" stroke-linejoin="round" opacity=".8"/>
<path d="M1417.500 116.300 V132.600 L1421.300 129.200 1423.900 134.900 1426.100 133.900 1423.600 128.400 1428.900 127.900Z" fill="#fbfbfb" stroke="#171b36" stroke-width="1.100" stroke-linejoin="round"/>
<g fill="none" stroke="#fcfcfc" stroke-width="2">
<path d="M640.800 642.300 L647.700 638.600 V661.500 M640.800 661.600 H654.600"/>
<path d="M831.600 644 C832 640.800 834.800 638.900 838 638.900 C841.600 638.900 844.200 641.200 844.200 644.600 C844.200 648 842 650.600 838.600 654 L831.600 661 V661.600 H845.600" stroke-linejoin="round"/>
</g>
<!-- progress strip -->
<rect x="630" y="608" width="800" height="9" fill="#7b93b5"/>
<rect x="630" y="608" width="800" height="1" fill="#6a7f9b"/>
<rect x="631" y="609" width="204.5" height="7" fill="#97cb32"/>
<rect x="840" y="609" width="63" height="7" fill="#97cb32"/>
<rect x="630" y="616.3" width="800" height="1.2" fill="#f2f3f4"/>
<rect x="836" y="607.5" width="1.6" height="10" fill="#f2f3f4"/>
<rect x="837.6" y="607.5" width="1.4" height="9" fill="#8b9094"/>
<rect x="1428.3" y="608" width="1.2" height="9" fill="#f2f3f4"/>
</svg>
</div>
<span class="t" style="left:771.9px;top:112.2px;font-size:12px;color:#1b1b6a;letter-spacing:-0.02px;">Install Windows</span>
<span class="t" style="left:756.7px;top:160.8px;font-size:16px;color:#1c48a8;letter-spacing:-0.23px;">Installing Windows...</span>
<span class="t" style="left:757.4px;top:208.2px;font-size:12.2px;color:#0a0a0a;letter-spacing:-0.06px;">That's all the information we need right now. Your computer will restart several times during</span>
<span class="t" style="left:757.4px;top:223.2px;font-size:12.2px;color:#0a0a0a;letter-spacing:-0.04px;">installation.</span>
<span class="t" style="left:778.5px;top:264.1px;font-size:12.2px;color:#8a8a8a;letter-spacing:-0.11px;">Copying Windows files</span>
<span class="t" style="left:778.3px;top:283.1px;font-size:12.2px;font-weight:700;color:#0a0a0a;letter-spacing:-0.42px;">Expanding Windows files (0%) ...</span>
<span class="t" style="left:778.0px;top:302.1px;font-size:12.2px;color:#8a8a8a;letter-spacing:-0.15px;">Installing features</span>
<span class="t" style="left:778.0px;top:321.1px;font-size:12.2px;color:#8a8a8a;letter-spacing:-0.12px;">Installing updates</span>
<span class="t" style="left:778.5px;top:340.1px;font-size:12.2px;color:#8a8a8a;letter-spacing:0.01px;">Completing installation</span>
<span class="t" style="left:666.0px;top:633.1px;font-size:12.2px;color:#fdfdfd;letter-spacing:0.11px;">Collecting information</span>
<span class="t" style="left:857.0px;top:633.1px;font-size:12.2px;color:#fdfdfd;letter-spacing:-0.06px;">Installing Windows</span>
</div>
<div class="layer" id="top">
<div class="a" style="left:0;top:0;width:1440px;height:24px;background:#2b2a28"></div>
<div class="a" style="left:0;top:24px;width:1440px;height:1px;background:#1a1917"></div>
<svg style="left:0;top:0" width="1440" height="24" viewBox="0 0 1440 24">
<defs>
<radialGradient id="ffx" cx=".4" cy=".3" r=".75"><stop offset="0" stop-color="#7db8f2"/><stop offset=".5" stop-color="#2c66c4"/><stop offset="1" stop-color="#15367c"/></radialGradient>
<linearGradient id="fox" x1="0" y1="0" x2="0" y2="1"><stop offset="0" stop-color="#fbb02a"/><stop offset=".5" stop-color="#f07c14"/><stop offset="1" stop-color="#dc4f0c"/></linearGradient><radialGradient id="tbd" cx=".4" cy=".3" r=".75"><stop offset="0" stop-color="#4c8fe0"/><stop offset=".6" stop-color="#245cb4"/><stop offset="1" stop-color="#123a80"/></radialGradient><linearGradient id="spk" x1="0" y1="0" x2="0" y2="1"><stop offset="0" stop-color="#f4f4f4"/><stop offset="1" stop-color="#b9b9b9"/></linearGradient>
</defs>
<!-- system monitor -->
<g>
<rect x="3" y="1.800" width="38.300" height="20.200" fill="#000"/><path d="M3 22V10.3L4.1 9.9L5.2 10.8L6.3 10.1L7.4 9.8L8.5 10.8L9.6 12.4L10.7 12.0L11.8 11.9L12.9 10.3L14.0 11.2L15.1 10.4L16.2 10.1L17.3 9.9L18.4 10.2L19.5 12.4L20.6 12.1L21.7 12.0L22.8 12.0L23.9 10.2L25.0 10.5L26.1 11.5L27.2 11.8L28.3 12.2L29.4 12.2L30.5 9.9L31.6 11.4L32.7 11.6L33.8 11.1L34.9 10.1L36.0 11.0L37.1 9.9L38.2 12.4L39.3 12.2L40.4 11.2L41.3 11V22z" fill="#0b6cb6"/><path d="M3 10.3L4.1 9.9L5.2 10.8L6.3 10.1L7.4 9.8L8.5 10.8L9.6 12.4L10.7 12.0L11.8 11.9L12.9 10.3L14.0 11.2L15.1 10.4L16.2 10.1L17.3 9.9L18.4 10.2L19.5 12.4L20.6 12.1L21.7 12.0L22.8 12.0L23.9 10.2L25.0 10.5L26.1 11.5L27.2 11.8L28.3 12.2L29.4 12.2L30.5 9.9L31.6 11.4L32.7 11.6L33.8 11.1L34.9 10.1L36.0 11.0L37.1 9.9L38.2 12.4L39.3 12.2L40.4 11.2" fill="none" stroke="#2f9bec" stroke-width="1"/>
<rect x="44.800" y="1.800" width="38.300" height="20.200" fill="#000"/><rect x="44.800" y="8.200" width="38.300" height="8.200" fill="#aef2cd"/><rect x="44.800" y="16.400" width="38.300" height="5.600" fill="#0cab52"/>
<rect x="86.900" y="1.800" width="38.200" height="20.200" fill="#000"/><path d="M86.900 22V2L88.200 7 89.600 13 91.300 17.500 92.300 14 93.300 8 94.200 2H95.300L95.700 9 96.200 2H97.300L97.800 9 98.300 16 98.800 21 100.800 21.200 101.800 19 102.600 17.300 103.600 19.500 105 20.300 106.300 21.300 108.600 21.300 109.600 18.500 110.400 17 111.400 19.300 112.600 20.300 113.600 21.500 114.300 20.300 115 21.500 118.300 21.500 119 19 119.800 18 121 18.300 122.600 19.600 124.200 20.300 124.900 22z" fill="#f3e446"/>
<rect x="128.700" y="1.800" width="38.200" height="20.200" fill="#000"/><rect x="128.700" y="20" width="24.300" height="2" fill="#d8110b"/><rect x="153" y="20.900" width="13.900" height="1.100" fill="#c8100a"/>
<rect x="170.900" y="1.800" width="38.100" height="20.200" fill="#000"/>
</g>
<!-- virt-manager -->
<g><rect x="220.500" y="4" width="18" height="13.500" rx="1" fill="#f2f2f2"/><rect x="222.500" y="6" width="14" height="9.500" fill="#17323a"/><rect x="222.500" y="6" width="14" height="4" fill="#2b5560" opacity=".7"/><rect x="227" y="17.500" width="5" height="2.500" fill="#c9c9c9"/><rect x="223.500" y="19.800" width="12" height="2.200" rx="1" fill="#e4e4e4"/><circle cx="239.500" cy="4.800" r="3.800" fill="#dfe6ea"/><path d="M238.300 2.700l3 2.100-3 2.100z" fill="#3f7f9f"/></g>
<!-- firefox -->
<g><circle cx="275" cy="10" r="9" fill="url(#ffx)"/><ellipse cx="273" cy="5.500" rx="4" ry="2.600" fill="#b5dbfb" opacity=".75"/>
<path d="M263.400 11.200C263 6.500 264.800 3.200 267 1.400 266.800 2.800 267.100 4 267.900 5 269.100 3.400 271 2.700 272.600 2.800 270.600 4.400 270.100 6.400 270.600 8 271.600 8.200 273 8.200 274.100 8.700 273.500 10 272.100 10.900 270.900 11.300 271.100 13.200 272.700 15.500 276.100 15.500 279.600 15.500 282 13 282.600 10 283 8 282.700 6.400 282 4.900 284.100 6.400 285.700 9.200 285.400 12.600 285 18.200 280.500 22.300 274.600 22.300 268.400 22.300 263.800 17.600 263.400 11.200Z" fill="url(#fox)"/>
<path d="M264.300 10C264.200 7 265.200 4.800 266.400 3.400 266.500 4.600 267 5.600 267.800 6.300 268.700 4.800 270 3.900 271.300 3.500 270 5 269.600 6.800 270 8.400L268 10.500C266.500 10.800 265.300 10.600 264.300 10Z" fill="#fbd045" opacity=".9"/>
<path d="M266 17.500C268.500 20.500 273 21.800 277.500 20.600 281 19.600 283.600 17 284.600 13.800 283 16.600 280 18.400 276.500 18.600 272.500 18.800 269 18.400 266 17.500Z" fill="#c2410c" opacity=".85"/></g>
<!-- thunderbird -->
<g><circle cx="306.300" cy="11.500" r="10.500" fill="url(#tbd)"/>
<path d="M297 8.500C298.500 4 303 1.300 307.600 1.700 312 2.100 315.500 5 316.500 9 315.200 6.800 313.200 5.400 310.800 5 307.600 4.400 304.600 5.400 302.600 7.400 300.800 6.800 298.800 7.200 297 8.500Z" fill="#6fb0f0"/>
<path d="M298.600 10.800L309.600 7.400 314 13.600 303.800 18.800Z" fill="#eef1f5"/><path d="M298.600 10.800L306.800 13.200 309.600 7.400" fill="none" stroke="#a9b3c2" stroke-width=".8"/>
<path d="M296.600 14C298.500 19.800 305 23 311 20.600 314.600 19 316.800 15.400 316.600 11.600 315 16.400 310 19.600 304.500 18.600 301 18 298.200 16.400 296.600 14Z" fill="#0f3274"/>
<ellipse cx="301.300" cy="6.600" rx="3.300" ry="3" fill="#5a9be6"/><ellipse cx="302.300" cy="7.600" rx="1.800" ry="1.500" fill="#f4f6f9"/><circle cx="301.600" cy="6.300" r=".7" fill="#10203a"/><path d="M303 8.200l2.600 1.200-2.400 .8z" fill="#8a94a6"/></g>
<!-- gedit -->
<g><path d="M363 3.500h15l3.500 3.500v14h-18.500z" fill="#ececec" stroke="#9a9a9a" stroke-width=".8"/><path d="M366 8h8M366 11h11M366 14h10M366 17h8" stroke="#c4c4c4" stroke-width="1"/><path d="M384.500 1.500l1.800 1.500-11.500 15-3.300 1.800 1.200-3.500z" fill="#d8d8d8" stroke="#8a8a8a" stroke-width=".7"/></g>
<!-- terminal -->
<g><rect x="404" y="2.800" width="21" height="16.500" rx="1" fill="#e0e0e0" stroke="#8e8e8e" stroke-width=".8"/><rect x="406" y="4.800" width="17" height="12" fill="#1c1f20"/><path d="M407.500 7l2 1.500-2 1.500" fill="none" stroke="#d0d0d0" stroke-width=".9"/><rect x="411" y="10" width="3.500" height="1" fill="#d0d0d0"/><path d="M406 16.800h17l-2-8z" fill="#3a3e40" opacity=".6"/></g>
<!-- calculator -->
<g><rect x="445" y="2" width="19.500" height="20" rx="2" fill="#77777a" stroke="#4a4a4c" stroke-width=".8"/><rect x="447.500" y="4" width="14.500" height="4" fill="#9ad24a"/><g fill="#e6e6e4"><rect x="447.500" y="10" width="3" height="2.300"/><rect x="451.300" y="10" width="3" height="2.300"/><rect x="455.100" y="10" width="3" height="2.300"/><rect x="458.900" y="10" width="3" height="2.300"/><rect x="447.500" y="13.500" width="3" height="2.300"/><rect x="451.300" y="13.500" width="3" height="2.300"/><rect x="455.100" y="13.500" width="3" height="2.300"/><rect x="458.900" y="13.500" width="3" height="2.300"/><rect x="447.500" y="17" width="3" height="2.300"/><rect x="451.300" y="17" width="3" height="2.300"/><rect x="455.100" y="17" width="3" height="2.300"/><rect x="458.900" y="17" width="3" height="2.300"/></g></g>
<!-- pidgin -->
<g><path d="M477 21.500c-1-7 1-15 6.500-17.500 3-1.400 7-.8 9.500 1.500 3 2.800 3.500 9 4 16-3-1.500-5.500-2-8.500-2-4 0-7.500.5-11.500 2z" fill="#8a4fa8"/><path d="M480 21c0-3 2-5.500 6.500-5.500s6.500 2.500 6.500 5.500c-2-.8-4-1.200-6.500-1.200s-4.500.4-6.500 1.200z" fill="#c9a8d8"/><circle cx="483.500" cy="10" r="2.800" fill="#fff"/><circle cx="490.500" cy="10" r="2.800" fill="#fff"/><circle cx="484" cy="10.300" r="1.200" fill="#111"/><circle cx="490" cy="10.300" r="1.200" fill="#111"/><path d="M484.500 14.500l2.500-1.500 2.500 1.500-2.500 2.800z" fill="#f09020"/></g>
<!-- skype -->
<g><circle cx="515" cy="8" r="6.500" fill="#1bb1ee"/><circle cx="523.500" cy="15.500" r="6.500" fill="#1bb1ee"/><circle cx="519.200" cy="11.700" r="9" fill="#12a5e8"/><path d="M522.800 8.600c-.6-1.400-2-2.100-3.700-2.100-2 0-3.500 1-3.500 2.600 0 3.400 7.200 1.800 7.200 5.200 0 1.700-1.500 2.700-3.600 2.700-2 0-3.500-.9-4-2.500" fill="none" stroke="#fff" stroke-width="2.200" stroke-linecap="round"/></g>
<!-- rhythmbox speaker -->
<g><ellipse cx="568.500" cy="12" rx="10.500" ry="10" fill="#30445c" opacity=".55"/><rect x="561.500" y="1.800" width="14" height="20" rx="3" fill="url(#spk)" stroke="#8b8b8b" stroke-width=".7"/><circle cx="568.500" cy="10.500" r="4.800" fill="#c9a820"/><circle cx="568.500" cy="10.500" r="2.600" fill="#6a5a10"/><circle cx="568.500" cy="10.500" r="1.100" fill="#e8d060"/><circle cx="568.500" cy="18.300" r="1.400" fill="#8a8a8a"/></g>
<!-- inkscape -->
<g><path d="M601 1.300L612.300 11.200C613 11.900 612.800 12.800 611.800 13.200L603 16.200C601.800 16.600 600.200 16.600 599 16.200L590.200 13.200C589.200 12.800 589 11.900 589.700 11.200Z" fill="#0b0b0b" stroke="#3c3c3c" stroke-width=".5"/><path d="M601 2.600L605.200 6.400 603.600 7.800 602.200 6.600 600.600 8.400 599.200 7 597.400 8 596.400 6.800Z" fill="#eaeaea"/><path d="M597 9.500l3-1.500 2 1.500 2.500-1 2.500 2.500-5 2z" fill="#2e3a4e" opacity=".8"/><path d="M593.500 17.800c1.800-.6 4-.3 5 .4 1.400.9 3.600.8 5 0 1.300-.7 3-.4 3 .5s-1.200 1.100-2.400 1.300c-1.400.3-1.300 1-.2 1.300.9.300 .4 1-.9 1.100-1.900.1-3.600-.5-3.600-1.400 0-.8-1.400-1.100-3.200-1.200-2.300-.1-3.900-1.100-2.700-2z" fill="#0b0b0b"/></g>
<!-- gimp -->
<g><path d="M623.500 8.500c.8-2 2.300-2.600 3.600-1.800 1.800-2 5.400-2.600 8.200-1.500 2.600 1 4.200 3.200 4.200 5.800 0 3-2.400 5.400-6 6-3.200.5-6.200-.6-7.600-2.800-1.400-.4-2.400-1.600-2.400-3.200z" fill="#6c665c"/><path d="M623.800 8.200c.7-1.300 1.700-1.700 2.700-1.200l-.6 3z" fill="#3e3a34"/><circle cx="629.600" cy="9" r="2.500" fill="#fff"/><circle cx="635" cy="8.600" r="2.500" fill="#fff"/><circle cx="630.200" cy="9.300" r="1.100" fill="#111"/><circle cx="635.400" cy="9" r="1.100" fill="#111"/><ellipse cx="632.400" cy="12.400" rx="1.800" ry="1.100" fill="#1e1a16"/><path d="M633.500 14l6.500 3.800" stroke="#d9801c" stroke-width="1.700" stroke-linecap="round"/><path d="M639.500 17.500l2 1.300" stroke="#3a3a3a" stroke-width="1.300" stroke-linecap="round"/></g>
<!-- colour tool -->
<g transform="translate(655,1.500)"><defs><linearGradient id="rb" x1="0" y1="0" x2="1" y2=".6"><stop offset="0" stop-color="#2fb04a"/><stop offset=".3" stop-color="#d8d838"/><stop offset=".5" stop-color="#e0402c"/><stop offset=".75" stop-color="#a03ac0"/><stop offset="1" stop-color="#2a6ae0"/></linearGradient></defs><path d="M3.500 3.500L18.500 1.500 21 15.500 5 19.500Z" fill="#f4f4f4" stroke="#9a9a9a" stroke-width=".5"/><path d="M5 5L17.400 3.300 19.400 14.400 6.400 17.600Z" fill="url(#rb)"/><path d="M5 5L8 4.600 9.500 16.800 6.400 17.600Z" fill="#1e8a3a" opacity=".7"/><path d="M1 12.500L8.500 10.500 10.500 19 3 21Z" fill="#f4f4f4" stroke="#9a9a9a" stroke-width=".5"/><path d="M2.500 13.500L7.700 12.100 9 18 3.800 19.400Z" fill="#d83a2a"/><path d="M11 6.500L20 9.500 19.200 12 10.200 9Z" fill="#cfcfcf" stroke="#555" stroke-width=".6"/><path d="M12.500 7.800L18.500 9.800" stroke="#333" stroke-width="1.200"/></g>
<!-- OOo writer -->
<g><circle cx="702.500" cy="13" r="10" fill="#f1f1f1"/><path d="M697 9.300h12M696.500 13.200h13M697 17h9.500" stroke="#a2a2a2" stroke-width="2.100"/><circle cx="693.500" cy="4.500" r="4.200" fill="#2f6fc0"/><path d="M690.500 4.200c1-.8 2-.8 3 0s2 .8 3 0" stroke="#fff" stroke-width=".9" fill="none"/></g>
<!-- OOo calc -->
<g><circle cx="733.500" cy="13" r="10" fill="#f1f1f1"/><rect x="727.500" y="8.500" width="12.500" height="9" fill="none" stroke="#a8a8a8" stroke-width="1.200"/><path d="M727.500 11.500h12.500M727.500 14.500h12.500M731.700 8.500v9M735.900 8.500v9" stroke="#a8a8a8" stroke-width="1"/><circle cx="724.500" cy="4.500" r="4.200" fill="#2f6fc0"/><path d="M721.500 4.200c1-.8 2-.8 3 0s2 .8 3 0" stroke="#fff" stroke-width=".9" fill="none"/></g>
<!-- computer -->
<g><rect x="768.500" y="1.500" width="17" height="14" rx="1" fill="#d8d4c8" stroke="#8a867c" stroke-width=".7"/><rect x="770.500" y="3.300" width="13" height="9.500" fill="#3a2f8a"/><path d="M770.500 3.300h13v4l-13 4z" fill="#5a50b0" opacity=".7"/><rect x="774.500" y="15.500" width="5" height="2" fill="#b0ac9f"/><path d="M767.500 18h17.500l2 3.800h-21.500z" fill="#e4e1d8" stroke="#8a867c" stroke-width=".6"/><path d="M768 19.500h18M767.500 20.600h19.500" stroke="#a09c90" stroke-width=".5"/><path d="M785.500 17c2 0 3 .8 3 2" stroke="#8a867c" stroke-width=".7" fill="none"/></g>
<!-- network kbd -->
<g><circle cx="851" cy="6.500" r="5" fill="#3f7fd0"/><path d="M848 4c1.500-1 3-1 4 0s.5 2.500-1 3-2 2-1 3.500" fill="none" stroke="#a8d0a0" stroke-width="1.300"/><circle cx="851" cy="6.500" r="5" fill="none" stroke="#2a4f90" stroke-width=".6"/><path d="M855 11c2 1 3 2.500 3 4.500" stroke="#d8d8d8" stroke-width="1.200" fill="none"/><path d="M843.500 14.500h15.500l2 6h-19.500z" fill="#e8e8e6" stroke="#8a8a88" stroke-width=".6"/><path d="M843.500 16h15.500M843 17.500h16.500M842.500 19h17.500" stroke="#9a9a98" stroke-width=".6"/></g>
<!-- cpufreq x2 -->
<g id="cpuf"><rect x="874" y="3.500" width="13.500" height="16.500" fill="#6f7a3a" stroke="#3e4520" stroke-width=".8"/><rect x="877.500" y="7.500" width="6.500" height="8" fill="#b8b8a8" stroke="#4a5028" stroke-width=".6"/><path d="M872.500 6h2M872.500 9h2M872.500 12h2M872.500 15h2M872.500 18h2" stroke="#d8c860" stroke-width="1"/><rect x="888" y="2.500" width="7" height="18.500" fill="#fbfbfb" stroke="#1a1a1a" stroke-width=".8"/><rect x="888.400" y="12" width="6.200" height="8.600" fill="#7d6cdc"/></g>
<use href="#cpuf" x="33.600"/>
<g fill="#4a4946"><circle cx="943" cy="5" r=".8"/><circle cx="945.500" cy="5" r=".8"/><circle cx="943" cy="8.500" r=".8"/><circle cx="945.500" cy="8.500" r=".8"/><circle cx="943" cy="12" r=".8"/><circle cx="945.500" cy="12" r=".8"/><circle cx="943" cy="15.500" r=".8"/><circle cx="945.500" cy="15.500" r=".8"/><circle cx="943" cy="19" r=".8"/><circle cx="945.500" cy="19" r=".8"/></g>
<!-- speaker tray -->
<g><ellipse cx="963" cy="11.500" rx="10" ry="10" fill="#30445c" opacity=".55"/><rect x="956.500" y="1.800" width="13" height="19.500" rx="3" fill="url(#spk)" stroke="#8b8b8b" stroke-width=".7"/><circle cx="963" cy="10" r="4.500" fill="#c9a820"/><circle cx="963" cy="10" r="2.400" fill="#6a5a10"/><circle cx="963" cy="10" r="1" fill="#e8d060"/><circle cx="963" cy="17.800" r="1.300" fill="#8a8a8a"/></g>
<!-- chat -->
<g><path d="M982 3h15.500v11h-11l-3 3.500v-3.500h-1.500z" fill="#f4f7fb" stroke="#5a88c8" stroke-width="1.200"/><circle cx="994" cy="14.500" r="6.300" fill="#7ac62e" stroke="#4a9018" stroke-width=".7"/><path d="M990 12c1.500-2.500 5-3.500 7.500-1.500" stroke="#b8e888" stroke-width="1.400" fill="none" opacity=".8"/></g>
<!-- keyboard globe -->
<g><path d="M1020 3c1-1.500 3-1.500 4 0s3 1 4-.5" stroke="#5a88c8" stroke-width="1" fill="none"/><path d="M1011 9h18l1.500 8.500h-21z" fill="#ececea" stroke="#8a8a88" stroke-width=".6"/><path d="M1011 11h18M1010.500 13h19M1010 15h20" stroke="#9a9a98" stroke-width=".7"/><circle cx="1013.500" cy="17.500" r="4.200" fill="#3f7fd0" stroke="#2a4f90" stroke-width=".5"/><path d="M1011.500 16c1-1 2.500-.8 3 .2s-.5 1.800-1.500 2.500" stroke="#a8d0a0" stroke-width="1.100" fill="none"/></g>
<!-- volume -->
<g><path d="M1039.500 8.500h4l5-5v17l-5-5h-4z" fill="#b0b0ae" stroke="#7a7a78" stroke-width=".6"/><path d="M1051 8c1.500 2 1.500 6 0 8" stroke="#4a78c8" stroke-width="1.300" fill="none"/><path d="M1053.500 5.500c2.500 3.500 2.500 9.500 0 13" stroke="#4a78c8" stroke-width="1.300" fill="none"/><path d="M1056 3.500c3.500 5 3.500 12 0 17" stroke="#3a68b8" stroke-width="1.200" fill="none"/></g>
<!-- bluetooth -->
<g><ellipse cx="1076.800" cy="11.800" rx="7" ry="9.500" fill="#2a6fd0" stroke="#cfe0f5" stroke-width="1"/><path d="M1073.500 8l6.500 7-3.300 3.300v-13l3.300 3.200-6.500 7" fill="none" stroke="#fff" stroke-width="1.300"/></g>
<!-- network monitors -->
<g><rect x="1101" y="2.500" width="13.500" height="9.500" fill="#e8e8e6" stroke="#5a5a58" stroke-width=".6"/><rect x="1102.500" y="4" width="10.500" height="6.500" fill="#8a5a1e"/><rect x="1094" y="7.500" width="14.500" height="10.500" fill="#e8e8e6" stroke="#5a5a58" stroke-width=".6"/><rect x="1095.500" y="9" width="11.500" height="7.500" fill="#7a4a14"/><path d="M1095.500 9h11.500v3l-11.500 2z" fill="#b07a30" opacity=".8"/><rect x="1099" y="18" width="5" height="1.500" fill="#bbb"/><rect x="1095" y="19.500" width="13" height="1.800" fill="#e4e4e2"/><rect x="1109" y="12.500" width="5" height="1.400" fill="#ccc"/></g>
<!-- battery -->
<g><rect x="1125" y="3.500" width="10.500" height="16.500" rx="1" fill="#e8eef5" stroke="#8aa0c0" stroke-width=".8"/><rect x="1128" y="1.800" width="4.500" height="2" fill="#c8d0da"/><rect x="1126.500" y="5.500" width="6" height="13" fill="#2f6fc8"/><path d="M1134 9.500h6v3h2.500v4h-1v5h-2.500v-3h-2v3h-2.500v-5h-1v-4h.5z" fill="#f2f2f0" stroke="#9a9a98" stroke-width=".6"/></g>
</svg>
<span class="t" style="left:1159.5px;top:4.2px;font-size:14px;color:#c5c1b5;letter-spacing:0.18px;">Sun Apr 17, 00:30:39</span>
<span class="t" style="left:1312.5px;top:3.9px;font-size:14.6px;font-weight:700;color:#dcd8cc;letter-spacing:0.90px;">Digital Mermaid</span>
</div>
<div class="layer" id="bot">
<div class="a" style="left:0;top:875px;width:1440px;height:25px;background:#2c2b29;border-top:1px solid #3d3c39"></div>
<svg style="left:0;top:875px" width="1440" height="25" viewBox="0 875 1440 25">
<!-- fedora -->
<circle cx="12.300" cy="887.300" r="9.600" fill="#2a5db0"/><circle cx="12.300" cy="887.300" r="9.600" fill="none" stroke="#1d3f80" stroke-width=".6"/>
<path d="M8.500 893.800c2.600.6 4.600-.9 4.600-3.300v-6.600c0-2 1.300-3.200 3.200-3.200.5 0 .9.100 1.200.2" fill="none" stroke="#fff" stroke-width="2" stroke-linecap="round"/><path d="M9.200 887.600h7" stroke="#fff" stroke-width="2" stroke-linecap="round"/>
<path d="M18.500 879.500l2-2 2 2" fill="none" stroke="#d0d0d0" stroke-width=".9"/>
<g fill="#3f3e3b"><circle cx="34.500" cy="880" r=".8"/><circle cx="37" cy="880" r=".8"/><circle cx="34.500" cy="883.500" r=".8"/><circle cx="37" cy="883.500" r=".8"/><circle cx="34.500" cy="887" r=".8"/><circle cx="37" cy="887" r=".8"/><circle cx="34.500" cy="890.500" r=".8"/><circle cx="37" cy="890.500" r=".8"/><circle cx="34.500" cy="894" r=".8"/><circle cx="37" cy="894" r=".8"/></g>
<!-- task buttons -->
<g fill="#31302d" stroke="#1d1c1a" stroke-width="1"><rect x="43.500" y="877.500" width="198" height="20.500" rx="2.500"/><rect x="244.500" y="877.500" width="197" height="20.500" rx="2.500"/><rect x="445.500" y="877.500" width="198.500" height="20.500" rx="2.500"/></g>
<g fill="none" stroke="#3b3a37" stroke-width="1"><path d="M45 878.500h195M246 878.500h194M447 878.500h195.500"/></g>
<!-- terminal icon -->
<rect x="51.300" y="882" width="14.200" height="11" rx=".8" fill="#a9a9a7" stroke="#6e6e6c" stroke-width=".6"/><rect x="52.800" y="883.500" width="11.200" height="8" fill="#2a2d2e"/><path d="M54 885.200l1.600 1.100-1.600 1.100" fill="none" stroke="#cfcfcf" stroke-width=".7"/><rect x="56.500" y="888" width="2.500" height=".8" fill="#cfcfcf"/>
<!-- vm icons -->
<g id="tvm"><rect x="251.500" y="881" width="12.800" height="9.500" rx=".8" fill="#f1f1f1"/><rect x="253" y="882.500" width="9.800" height="6.500" fill="#17323a"/><rect x="253" y="882.500" width="9.800" height="2.800" fill="#2b5c66" opacity=".8"/><rect x="256" y="890.500" width="3.800" height="1.800" fill="#c9c9c9"/><rect x="253.300" y="892.200" width="9.200" height="1.800" rx=".9" fill="#e6e6e6"/><circle cx="264.800" cy="881.600" r="2.700" fill="#dfe6ea"/><path d="M264 880.200l2 1.400-2 1.400z" fill="#3f7f9f"/></g>
<use href="#tvm" x="200.500"/>
<!-- workspace switcher -->
<rect x="1275.500" y="878.500" width="129" height="20" fill="#5d4a43"/>
<g fill="#87604f" stroke="#e9e5d5" stroke-width="1"><rect x="1276" y="879" width="31.500" height="19"/><rect x="1308.500" y="879" width="10.500" height="16.500"/><rect x="1322" y="879" width="17.500" height="13.500"/>
<rect x="1340.500" y="879" width="12" height="9.300"/><rect x="1352.500" y="879" width="19" height="9.300"/><rect x="1371.500" y="879" width="13" height="9.300"/><rect x="1384.500" y="879" width="19.500" height="9.300"/>
<rect x="1340.500" y="888.300" width="12" height="9.700"/><rect x="1352.500" y="888.300" width="19" height="9.700"/><rect x="1371.500" y="888.300" width="13" height="9.700"/><rect x="1384.500" y="888.300" width="19.500" height="9.700"/></g>
<rect x="1285" y="882" width="14.500" height="12" rx=".8" fill="#b9b9b7" stroke="#4e4e4c" stroke-width=".6"/><rect x="1286.500" y="883.500" width="11.500" height="9" fill="#2a2d2e"/><path d="M1287.800 885.200l1.600 1.100-1.600 1.100" fill="none" stroke="#cfcfcf" stroke-width=".7"/><rect x="1290" y="889" width="3" height=".8" fill="#cfcfcf"/>
<!-- trash applet -->
<defs><linearGradient id="tra" x1="0" y1="0" x2="1" y2=".4"><stop offset="0" stop-color="#fff57e"/><stop offset=".45" stop-color="#ecd744"/><stop offset="1" stop-color="#bf9f04"/></linearGradient></defs>
<path d="M1417.300 885.600H1436.400L1435.600 897.600Q1435.500 898.600 1434.500 898.600H1419.300Q1418.300 898.600 1418.200 897.600Z" fill="url(#tra)" stroke="#a88c10" stroke-width=".5"/>
<rect x="1416.600" y="878.300" width="20.400" height="7.600" rx="2.200" fill="#f3f4f3" stroke="#6f6f6d" stroke-width=".5"/>
<ellipse cx="1426" cy="881.400" rx="8.200" ry="2.300" fill="#4c4d50"/>
<path d="M1419.500 881.800l2.500-2 2 .8 1.500-1.500 2.500 1 2-1.300 2.500 1.500-1 1.800-3 .6-2.500-.8-2.500 1-2.500-.6z" fill="#ededec"/>
<path d="M1430.800 878.600L1433.600 876.900 1437.300 880.600 1437.600 884.500 1436.200 887.300 1434.900 888.800 1434.100 884.600 1431.500 881.800Z" fill="#fbfbfa" stroke="#b9b9b7" stroke-width=".4"/>
<g fill="none" stroke="#8b8434" stroke-width="1.500" opacity=".9"><path d="M1424.600 888.400c1.500-1.300 3.400-1.200 4.600 .3"/><path d="M1431 891.300c.5 1.800-.3 3.400-2 4.200"/><path d="M1426.200 895.600c-1.800-.1-3.100-1.300-3.400-3.100"/></g>
<g fill="#8b8434"><path d="M1428.300 887.400l2.200 1.800-2.600 .9z"/><path d="M1430.600 895.900l-2.700 .7 .9-2.500z"/><path d="M1421.900 893.700l.6-2.700 1.900 1.900z"/></g>
</svg>
<span class="t" style="left:74.5px;top:880.2px;font-size:14px;color:#cbc7bb;letter-spacing:0.70px;">&#91;digimer@lework:~&#93;</span>
<span class="t" style="left:275.6px;top:880.2px;font-size:14px;color:#cbc7bb;letter-spacing:0.33px;">Virtual Machine Mana...</span>
<span class="t" style="left:476.2px;top:880.2px;font-size:14px;color:#cbc7bb;letter-spacing:0.42px;">vm0002_win1 Virtual ...</span>
</div>
<svg style="left:1000px;top:730px" width="24" height="28" viewBox="1000 730 24 28"><path d="M1004.500 735.300 V751.700 L1008.300 748.200 1010.800 753.400 1012.900 752.500 1010.500 747.300 1015.700 746.800Z" fill="#0c0c0c" stroke="#fdfdfd" stroke-width="1.100" stroke-linejoin="round"/></svg>
</body>
</html>
